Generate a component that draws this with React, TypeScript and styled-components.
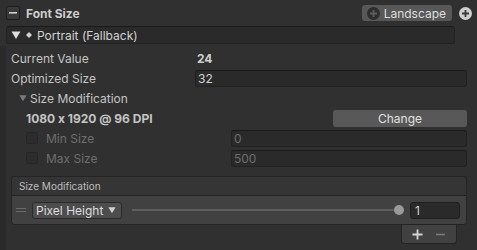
import React from "react";
import styled, { createGlobalStyle } from "styled-components";

const GlobalStyle = createGlobalStyle`
  html, body {
    margin: 0;
    padding: 0;
    background: #303030;
  }
  body {
    font-family: Inter, "Noto Sans", "Liberation Sans", sans-serif;
    font-size: 12px;
    font-feature-settings: "calt" 0;
    color: #c4c4c4;
  }
`;

const Page = styled.div`
  width: 477px;
  height: 250px;
  background: #303030;
  overflow: hidden;
  display: flex;
  flex-direction: column;
`;

const Header = styled.div`
  display: flex;
  align-items: center;
  height: 20px;
  padding: 3px 5px 0 6px;
  gap: 6px;
`;

const CollapseBox = styled.div`
  width: 14px;
  height: 14px;
  box-sizing: border-box;
  border: 1px solid #1e1e1e;
  border-radius: 2px;
  background: #3a3a3a;
  display: flex;
  align-items: center;
  justify-content: center;
`;

const Title = styled.div`
  font-weight: 700;
  color: #cccccc;
  flex: 1;
`;

const PillButton = styled.div`
  height: 16px;
  padding: 0 6px 0 5px;
  margin-right: 1px;
  border-radius: 3px;
  background: #585858;
  color: #dedede;
  display: flex;
  align-items: center;
  gap: 4px;
`;

const Foldout = styled.div`
  margin: 3px 22px 0 6px;
  height: 18px;
  box-sizing: border-box;
  background: #2a2a2a;
  border: 1px solid #222;
  border-top-color: #1a1a1a;
  border-radius: 3px;
  display: flex;
  align-items: center;
  gap: 5px;
  padding-left: 4px;
  color: #d2d2d2;
`;

const Body = styled.div`
  flex: 1;
  display: flex;
  flex-direction: column;
  border-left: 6px solid #2a2a2a;
  margin-top: 2px;
  padding: 3px 10px 0 5px;
`;

const Row = styled.div<{ $indent?: number }>`
  display: flex;
  align-items: center;
  height: 18px;
  margin-bottom: 2px;
  padding-left: ${(p) => p.$indent ?? 0}px;
`;

const Label = styled.div<{ $w?: number; $muted?: boolean; $bold?: boolean }>`
  width: ${(p) => (p.$w ? `${p.$w}px` : "auto")};
  flex: ${(p) => (p.$w ? "none" : "1")};
  color: ${(p) => (p.$muted ? "#6e6e6e" : "#c4c4c4")};
  font-weight: ${(p) => (p.$bold ? 700 : 400)};
  white-space: nowrap;
`;

const Value = styled.div`
  font-weight: 700;
  color: #d0d0d0;
  padding-left: 1px;
`;

const Field = styled.div<{ $muted?: boolean }>`
  flex: 1;
  height: 17px;
  box-sizing: border-box;
  background: #2a2a2a;
  border: 1px solid #212121;
  border-top-color: #1a1a1a;
  border-radius: 3px;
  padding-left: 2px;
  display: flex;
  align-items: center;
  color: ${(p) => (p.$muted ? "#6e6e6e" : "#d2d2d2")};
`;

const FoldTitle = styled.div`
  display: flex;
  align-items: center;
  gap: 3px;
  padding-left: 4px;
`;

const ChangeButton = styled.div`
  margin-left: auto;
  width: 134px;
  height: 17px;
  border-radius: 3px;
  background: #585858;
  color: #e0e0e0;
  display: flex;
  align-items: center;
  justify-content: center;
`;

const Check = styled.div`
  width: 12px;
  height: 12px;
  box-sizing: border-box;
  border: 1px solid #262626;
  border-radius: 2px;
  background: #2c2c2c;
  margin-right: 8px;
`;

const List = styled.div`
  margin-top: 7px;
  display: flex;
  flex-direction: column;
  align-items: flex-end;
`;

const ListHeader = styled.div`
  align-self: stretch;
  height: 19px;
  box-sizing: border-box;
  border: 1px solid #242424;
  border-bottom: none;
  border-radius: 3px 3px 0 0;
  background: #353535;
  font-size: 10px;
  color: #bdbdbd;
  display: flex;
  align-items: center;
  padding-left: 7px;
`;

const ListBody = styled.div`
  align-self: stretch;
  height: 30px;
  box-sizing: border-box;
  border: 1px solid #242424;
  border-radius: 0 0 3px 3px;
  background: #414141;
  display: flex;
  align-items: center;
  padding: 0 6px 0 4px;
  gap: 6px;
`;

const Handle = styled.div`
  width: 10px;
  height: 4px;
  border-top: 1px solid #6a6a6a;
  border-bottom: 1px solid #6a6a6a;
  box-sizing: border-box;
`;

const Dropdown = styled.div`
  height: 17px;
  box-sizing: border-box;
  background: #4d4d4d;
  border: 1px solid #2a2a2a;
  border-radius: 3px;
  display: flex;
  align-items: center;
  gap: 5px;
  padding: 0 5px 0 3px;
  color: #dedede;
`;

const Slider = styled.div`
  flex: 1;
  height: 11px;
  margin-left: 4px;
  display: flex;
  align-items: center;
`;

const Track = styled.div`
  flex: 1;
  height: 2px;
  background: #5e5e5e;
`;

const Knob = styled.div`
  width: 10px;
  height: 10px;
  border-radius: 50%;
  background: #9a9a9a;
`;

const NumberField = styled.div`
  width: 50px;
  height: 17px;
  box-sizing: border-box;
  background: #2a2a2a;
  border: 1px solid #1e1e1e;
  border-radius: 3px;
  display: flex;
  align-items: center;
  padding-left: 4px;
  color: #d2d2d2;
`;

const ListFooter = styled.div`
  margin-right: 10px;
  width: 56px;
  height: 19px;
  box-sizing: border-box;
  border: 1px solid #242424;
  border-top: none;
  border-radius: 0 0 3px 3px;
  background: #414141;
  display: flex;
  align-items: center;
  justify-content: space-around;
  padding: 0 4px;
`;

const Tri = ({ size = 10, color = "#c8c8c8" }: { size?: number; color?: string }) => (
  <svg width={size} height={size} viewBox="0 0 10 10">
    <path d="M0.5 1.5 H9.5 L5 9 Z" fill={color} />
  </svg>
);

const CirclePlus = ({ bg, fg }: { bg: string; fg: string }) => (
  <svg width="13" height="13" viewBox="0 0 13 13">
    <circle cx="6.5" cy="6.5" r="6.5" fill={bg} />
    <path d="M6.5 3 V10 M3 6.5 H10" stroke={fg} strokeWidth="1.8" />
  </svg>
);

export default function App() {
  return (
    <Page>
      <GlobalStyle />
      <Header>
        <CollapseBox>
          <svg width="8" height="2" viewBox="0 0 8 2">
            <rect width="8" height="1.6" fill="#cfcfcf" />
          </svg>
        </CollapseBox>
        <Title>Font Size</Title>
        <PillButton>
          <CirclePlus bg="#2e2e2e" fg="#5c5c5c" />
          Landscape
        </PillButton>
        <CirclePlus bg="#cfcfcf" fg="#383838" />
      </Header>

      <Foldout>
        <Tri size={10} color="#dcdcdc" />
        <svg width="6" height="6" viewBox="0 0 6 6">
          <path d="M3 0 L6 3 L3 6 L0 3 Z" fill="#d0d0d0" />
        </svg>
        Portrait (Fallback)
      </Foldout>

      <Body>
        <Row>
          <Label $w={185}>Current Value</Label>
          <Value>24</Value>
        </Row>
        <Row>
          <Label $w={184}>Optimized Size</Label>
          <Field>32</Field>
        </Row>
        <Row $indent={4}>
          <FoldTitle>
            <Tri size={8} color="#7a7a7a" />
            Size Modification
          </FoldTitle>
        </Row>
        <Row $indent={15}>
          <Label $bold>1080 x 1920 @ 96 DPI</Label>
          <ChangeButton>Change</ChangeButton>
        </Row>
        <Row $indent={15}>
          <Check />
          <Label $w={185} $muted>Min Size</Label>
          <Field $muted>0</Field>
        </Row>
        <Row $indent={15}>
          <Check />
          <Label $w={185} $muted>Max Size</Label>
          <Field $muted>500</Field>
        </Row>

        <List>
          <ListHeader>Size Modification</ListHeader>
          <ListBody>
            <Handle />
            <Dropdown>
              Pixel Height
              <Tri size={8} color="#d0d0d0" />
            </Dropdown>
            <Slider>
              <Track />
              <Knob />
            </Slider>
            <NumberField>1</NumberField>
          </ListBody>
          <ListFooter>
            <svg width="11" height="11" viewBox="0 0 11 11">
              <path d="M5.5 0.5 V10.5 M0.5 5.5 H10.5" stroke="#d6d6d6" strokeWidth="1.8" />
            </svg>
            <svg width="11" height="11" viewBox="0 0 11 11">
              <path d="M1 5.5 H10" stroke="#7a7a7a" strokeWidth="1.6" />
            </svg>
          </ListFooter>
        </List>
      </Body>
    </Page>
  );
}
